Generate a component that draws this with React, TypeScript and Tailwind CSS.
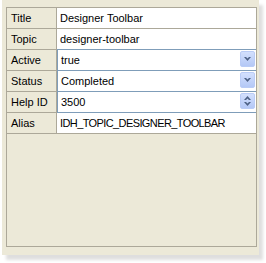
import type { ReactNode } from "react";

type Row = {
    label: string;
    value: string;
    kind?: "combo" | "spin";
};

const rows: Row[] = [
    { label: "Title", value: "Designer Toolbar" },
    { label: "Topic", value: "designer-toolbar" },
    { label: "Active", value: "true", kind: "combo" },
    { label: "Status", value: "Completed", kind: "combo" },
    { label: "Help ID", value: "3500", kind: "spin" },
    { label: "Alias", value: "IDH_TOPIC_DESIGNER_TOOLBAR" },
];

function Chevron({ up }: { up?: boolean }) {
    return (
        <svg width="7" height="4" viewBox="0 0 7 4" className={up ? "rotate-180" : ""}>
            <path d="M0 0h2l1.5 1.5L5 0h2L3.5 4z" fill="#4D6185" />
        </svg>
    );
}

function XpButton({ children }: { children: ReactNode }) {
    return (
        <div className="absolute right-[1px] top-[1px] w-[15px] h-[16px] rounded-[2px] border border-[#BACCF6] bg-gradient-to-b from-[#D3E0FD] to-[#B4C8F6] flex flex-col items-center justify-center gap-[2px]">
            {children}
        </div>
    );
}

export default function App() {
    return (
        <div className="w-[266px] h-[263px] bg-white font-['Liberation_Sans',Arial,sans-serif] text-[11px] text-black">
            <div className="ml-[2px] w-[257px] h-[255px] bg-[#ECE9D8] pt-[7px] pl-[4px] shadow-[4px_5px_3px_rgba(0,0,0,0.13)]">
                <div className="w-[251px] h-[240px] border border-[#ACA899]">
                    {rows.map((r, i) => {
                        const blue = r.kind !== undefined;
                        const nextBlue = rows[i + 1]?.kind !== undefined;
                        return (
                            <div key={r.label} className="flex h-[21px]">
                                <div className="w-[50px] border-r border-b border-[#ACA899] pl-[4px] flex items-center">
                                    {r.label}
                                </div>
                                <div
                                    className={
                                        "relative flex-1 bg-white border-b flex items-center pl-[3px] " +
                                        (blue ? "border-l border-[#7F9DB9] " : "border-[#ACA899] ") +
                                        (nextBlue ? "border-b-[#7F9DB9]" : "")
                                    }
                                >
                                    <span className={r.kind === undefined && r.value.startsWith("IDH") ? "tracking-[-0.6px]" : ""}>
                                        {r.value}
                                    </span>
                                    {r.kind === "combo" && (
                                        <XpButton>
                                            <Chevron />
                                        </XpButton>
                                    )}
                                    {r.kind === "spin" && (
                                        <XpButton>
                                            <Chevron up />
                                            <Chevron />
                                        </XpButton>
                                    )}
                                </div>
                            </div>
                        );
                    })}
                </div>
            </div>
        </div>
    );
}
